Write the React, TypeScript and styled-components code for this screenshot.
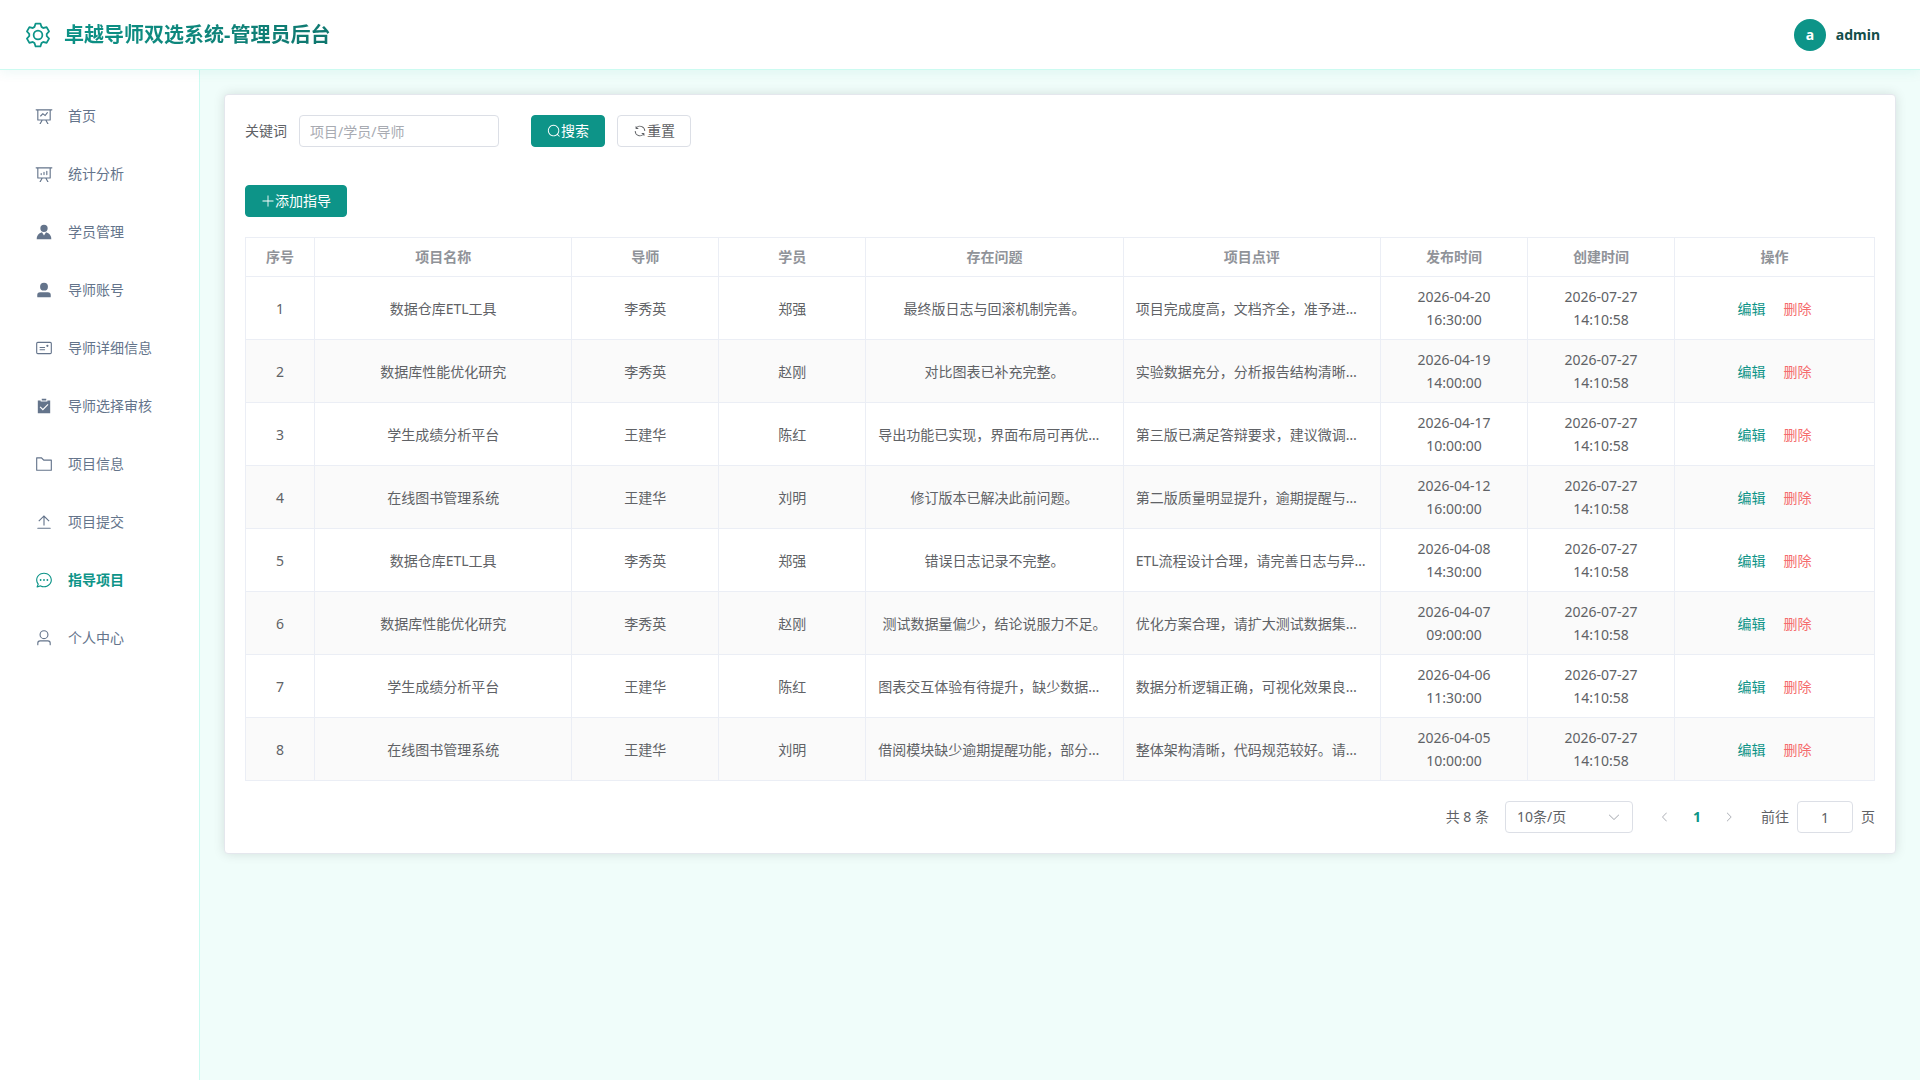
import React, { useState } from "react";
import styled, { createGlobalStyle } from "styled-components";

const color = {
  primary: "#0d9488",
  primaryDark: "#0f766e",
  ink: "#134e4a",
  mint: "#ccfbf1",
  page: "#f0fdfa",
  slate: "#64748b",
  text: "#606266",
  muted: "#909399",
  placeholder: "#a8abb2",
  border: "#dcdfe6",
  line: "#ebeef5",
  danger: "#f56c6c",
};

const GlobalStyle = createGlobalStyle`
  *, *::before, *::after { box-sizing: border-box; }
  body {
    margin: 0;
    background: ${color.page};
    color: ${color.text};
    font-family: "Noto Sans", "Noto Sans CJK SC", sans-serif;
    font-size: 14px;
    line-height: 22px;
  }
  button, input, select { font: inherit; color: inherit; margin: 0; }
`;

const icons = {
  setting:
    "M600.704 64a32 32 0 0 1 30.464 22.208l35.2 109.376c14.784 7.232 28.928 15.36 42.432 24.512l112.384-24.192a32 32 0 0 1 34.432 15.36L944.32 364.8a32 32 0 0 1-4.032 37.504l-77.12 85.12a357.12 357.12 0 0 1 0 49.024l77.12 85.248a32 32 0 0 1 4.032 37.504l-88.704 153.6a32 32 0 0 1-34.432 15.296L708.8 803.904c-13.44 9.088-27.648 17.28-42.368 24.512l-35.264 109.376A32 32 0 0 1 600.704 960H423.296a32 32 0 0 1-30.464-22.208L357.696 828.48a351.616 351.616 0 0 1-42.56-24.64l-112.32 24.256a32 32 0 0 1-34.432-15.36L79.68 659.2a32 32 0 0 1 4.032-37.504l77.12-85.248a357.12 357.12 0 0 1 0-48.896l-77.12-85.248A32 32 0 0 1 79.68 364.8l88.704-153.6a32 32 0 0 1 34.432-15.296l112.32 24.256c13.568-9.152 27.776-17.408 42.56-24.64l35.2-109.312A32 32 0 0 1 423.232 64H600.64zm-23.424 64H446.72l-36.352 113.088-24.512 11.968a294.113 294.113 0 0 0-34.816 20.096l-22.656 15.36-116.224-25.088-65.28 113.152 79.68 88.192-1.92 27.136a293.12 293.12 0 0 0 0 40.192l1.92 27.136-79.808 88.192 65.344 113.152 116.224-25.024 22.656 15.296a294.113 294.113 0 0 0 34.816 20.096l24.512 11.968L446.72 896h130.688l36.48-113.152 24.448-11.904a288.282 288.282 0 0 0 34.752-20.096l22.592-15.296 116.288 25.024 65.28-113.152-79.744-88.192 1.92-27.136a293.12 293.12 0 0 0 0-40.256l-1.92-27.136 79.808-88.128-65.344-113.152-116.288 24.96-22.592-15.232a287.616 287.616 0 0 0-34.752-20.096l-24.448-11.904L577.344 128zM512 320a192 192 0 1 1 0 384 192 192 0 0 1 0-384m0 64a128 128 0 1 0 0 256 128 128 0 0 0 0-256",
  dataLine:
    "M359.168 768H160a32 32 0 0 1-32-32V192H64a32 32 0 0 1 0-64h896a32 32 0 1 1 0 64h-64v544a32 32 0 0 1-32 32H665.216l110.848 192h-73.856L591.36 768H433.024L322.176 960H248.32zM832 192H192v512h640zM342.656 534.656a32 32 0 1 1-45.312-45.312L444.992 341.76l125.44 94.08L679.04 300.032a32 32 0 1 1 49.92 39.936L581.632 524.224 451.008 426.24 342.656 534.592z",
  dataAnalysis:
    "m665.216 768 110.848 192h-73.856L591.36 768H433.024L322.176 960H248.32l110.848-192H160a32 32 0 0 1-32-32V192H64a32 32 0 0 1 0-64h896a32 32 0 1 1 0 64h-64v544a32 32 0 0 1-32 32zM832 192H192v512h640zM352 448a32 32 0 0 1 32 32v64a32 32 0 0 1-64 0v-64a32 32 0 0 1 32-32m160-64a32 32 0 0 1 32 32v128a32 32 0 0 1-64 0V416a32 32 0 0 1 32-32m160-64a32 32 0 0 1 32 32v192a32 32 0 1 1-64 0V352a32 32 0 0 1 32-32",
  avatar:
    "M628.736 528.896A416 416 0 0 1 928 928H96a415.872 415.872 0 0 1 299.264-399.104L512 704zM720 304a208 208 0 1 1-416 0 208 208 0 0 1 416 0",
  userFilled:
    "M288 320a224 224 0 1 0 448 0 224 224 0 1 0-448 0m544 608H160a32 32 0 0 1-32-32v-96a160 160 0 0 1 160-160h448a160 160 0 0 1 160 160v96a32 32 0 0 1-32 32z",
  postcard:
    "M160 224a32 32 0 0 0-32 32v512a32 32 0 0 0 32 32h704a32 32 0 0 0 32-32V256a32 32 0 0 0-32-32zm0-64h704a96 96 0 0 1 96 96v512a96 96 0 0 1-96 96H160a96 96 0 0 1-96-96V256a96 96 0 0 1 96-96M704 320a64 64 0 1 1 0 128 64 64 0 0 1 0-128M288 448h256q32 0 32 32t-32 32H288q-32 0-32-32t32-32m0 128h256q32 0 32 32t-32 32H288q-32 0-32-32t32-32",
  checked:
    "M704 192h160v736H160V192h160.064v64H704zM311.616 537.28l-45.312 45.248L447.36 763.52l316.8-316.8-45.312-45.184L447.36 673.024zM384 192V96h256v96z",
  folder:
    "M128 192v640h768V320H485.76L357.504 192zm-32-64h287.872l128.384 128H928a32 32 0 0 1 32 32v576a32 32 0 0 1-32 32H96a32 32 0 0 1-32-32V160a32 32 0 0 1 32-32",
  upload:
    "M160 832h704a32 32 0 1 1 0 64H160a32 32 0 1 1 0-64m384-578.304V704h-64V247.296L237.248 490.048 192 444.8 508.8 128l316.8 316.8-45.312 45.248z",
  chat:
    "m174.72 855.68 135.296-45.12 23.68 11.84C388.096 849.536 448.576 864 512 864c211.84 0 384-166.784 384-352S723.84 160 512 160 128 326.784 128 512c0 69.12 24.96 139.264 70.848 199.232l22.08 28.8-46.272 115.584zm-45.248 82.56A32 32 0 0 1 89.6 896l58.368-145.92C94.72 680.32 64 596.864 64 512 64 299.904 256 96 512 96s448 203.904 448 416-192 416-448 416a461.056 461.056 0 0 1-206.912-48.384l-175.616 58.56zM512 563.2a51.2 51.2 0 1 1 0-102.4 51.2 51.2 0 0 1 0 102.4m192 0a51.2 51.2 0 1 1 0-102.4 51.2 51.2 0 0 1 0 102.4m-384 0a51.2 51.2 0 1 1 0-102.4 51.2 51.2 0 0 1 0 102.4",
  user:
    "M512 512a192 192 0 1 0 0-384 192 192 0 0 0 0 384m0 64a256 256 0 1 1 0-512 256 256 0 0 1 0 512m320 320v-96a96 96 0 0 0-96-96H288a96 96 0 0 0-96 96v96a32 32 0 1 1-64 0v-96a160 160 0 0 1 160-160h448a160 160 0 0 1 160 160v96a32 32 0 1 1-64 0",
  search:
    "m795.904 750.72 124.992 124.928a32 32 0 0 1-45.248 45.248L750.656 795.904a416 416 0 1 1 45.248-45.248zM480 832a352 352 0 1 0 0-704 352 352 0 0 0 0 704",
  refresh:
    "M771.776 794.88A384 384 0 0 1 128 512h64a320 320 0 0 0 555.712 216.448H654.72a32 32 0 1 1 0-64h149.056a32 32 0 0 1 32 32v148.928a32 32 0 1 1-64 0v-50.56zM276.288 295.616h92.992a32 32 0 0 1 0 64H220.16a32 32 0 0 1-32-32V178.56a32 32 0 0 1 64 0v50.56A384 384 0 0 1 896.128 512h-64a320 320 0 0 0-555.776-216.384z",
  plus:
    "M480 480V128a32 32 0 0 1 64 0v352h352a32 32 0 1 1 0 64H544v352a32 32 0 1 1-64 0V544H128a32 32 0 0 1 0-64z",
  arrowDown:
    "M831.872 340.864 512 652.672 192.128 340.864a30.592 30.592 0 0 0-42.752 0 29.12 29.12 0 0 0 0 41.6L489.664 714.24a32 32 0 0 0 44.672 0l340.288-331.712a29.12 29.12 0 0 0 0-41.728 30.592 30.592 0 0 0-42.752 0z",
  arrowLeft:
    "M609.408 149.376 277.76 489.6a32 32 0 0 0 0 44.672l331.648 340.352a29.12 29.12 0 0 0 41.728 0 30.592 30.592 0 0 0 0-42.752L339.264 511.936l311.872-319.872a30.592 30.592 0 0 0 0-42.688 29.12 29.12 0 0 0-41.728 0z",
  arrowRight:
    "M340.864 149.312a30.592 30.592 0 0 0 0 42.752L652.736 512 340.864 831.872a30.592 30.592 0 0 0 0 42.752 29.12 29.12 0 0 0 41.728 0L714.24 534.336a32 32 0 0 0 0-44.672L382.592 149.376a29.12 29.12 0 0 0-41.728 0z",
};

type IconName = keyof typeof icons;

const Svg = styled.svg`
  display: block;
  flex: none;
  fill: currentColor;
`;

const Icon = ({ name, size = 14 }: { name: IconName; size?: number }) => (
  <Svg viewBox="0 0 1024 1024" width={size} height={size} aria-hidden="true">
    <path d={icons[name]} />
  </Svg>
);

const Header = styled.header`
  position: relative;
  z-index: 1;
  display: flex;
  align-items: center;
  justify-content: space-between;
  height: 70px;
  padding: 0 24px;
  background: #fff;
  border-bottom: 1px solid ${color.mint};
  box-shadow: 0 2px 12px rgba(13, 148, 136, 0.08);
`;

const Brand = styled.div`
  display: flex;
  align-items: center;
  gap: 12px;
  color: ${color.primary};
`;

const Title = styled.h1`
  margin: 0;
  font-size: 20px;
  line-height: 29px;
  font-weight: 700;
  background: linear-gradient(135deg, ${color.primary}, ${color.primaryDark});
  background-clip: text;
  -webkit-background-clip: text;
  color: transparent;
`;

const Account = styled.div`
  display: flex;
  align-items: center;
  gap: 10px;
  padding: 0 16px;
  color: ${color.ink};
  font-weight: 700;
`;

const Badge = styled.span`
  display: grid;
  place-items: center;
  width: 32px;
  height: 32px;
  border-radius: 50%;
  background: ${color.primary};
  color: #fff;
`;

const Body = styled.div`
  display: flex;
  min-height: calc(100vh - 70px);
`;

const Sidebar = styled.nav`
  display: flex;
  flex: none;
  flex-direction: column;
  gap: 6px;
  width: 200px;
  padding: 20px 12px;
  background: #fff;
  border-right: 1px solid ${color.mint};
`;

const NavItem = styled.a<{ $active: boolean }>`
  display: flex;
  align-items: center;
  gap: 12px;
  height: 52px;
  padding: 0 20px;
  color: ${(p) => (p.$active ? color.primary : color.slate)};
  font-weight: ${(p) => (p.$active ? 700 : 400)};
  text-decoration: none;
`;

const NavIcon = styled.span`
  display: grid;
  place-items: center;
  width: 24px;
`;

const Main = styled.main`
  flex: 1;
  min-width: 0;
  padding: 24px;
`;

const Card = styled.section`
  display: flex;
  flex-direction: column;
  gap: 20px;
  padding: 20px;
  background: #fff;
  border: 1px solid #e4e7ed;
  border-radius: 4px;
  box-shadow: 0 0 12px rgba(0, 0, 0, 0.12);
`;

const SearchForm = styled.form`
  display: flex;
  align-items: center;
  gap: 32px;
  padding-bottom: 18px;
`;

const Field = styled.div`
  display: flex;
  align-items: center;
  gap: 12px;
`;

const TextInput = styled.input<{ $width: number; $center?: boolean }>`
  width: ${(p) => p.$width}px;
  height: 32px;
  padding: 0 10px;
  border: 1px solid ${color.border};
  border-radius: 4px;
  background: #fff;
  text-align: ${(p) => (p.$center ? "center" : "left")};
  outline: none;
  &::placeholder {
    color: ${color.placeholder};
    opacity: 1;
  }
  &:focus {
    border-color: ${color.primary};
  }
`;

const Button = styled.button<{ $primary?: boolean }>`
  display: inline-flex;
  align-items: center;
  height: 32px;
  padding: 0 15px;
  border: 1px solid ${(p) => (p.$primary ? color.primary : color.border)};
  border-radius: 4px;
  background: ${(p) => (p.$primary ? color.primary : "#fff")};
  color: ${(p) => (p.$primary ? "#fff" : color.text)};
  cursor: pointer;
`;

const Toolbar = styled.div`
  display: flex;
`;

const Table = styled.table`
  width: 100%;
  table-layout: fixed;
  border-collapse: separate;
  border-spacing: 0;
  text-align: center;
`;

const Col = styled.col<{ $width?: number }>`
  width: ${(p) => (p.$width ? `${p.$width}px` : "auto")};
`;

const HeadCell = styled.th`
  height: 40px;
  padding: 0 12px;
  border: solid ${color.line};
  border-width: 1px 1px 1px 0;
  color: ${color.muted};
  font-weight: 700;
  &:first-child {
    border-left-width: 1px;
  }
`;

const Row = styled.tr`
  &:nth-child(even) {
    background: #fafafa;
  }
`;

const Cell = styled.td`
  height: 63px;
  padding: 8px 12px;
  border: solid ${color.line};
  border-width: 0 1px 1px 0;
  line-height: 23px;
  &:first-child {
    border-left-width: 1px;
  }
`;

const ClippedCell = styled(Cell)`
  overflow: hidden;
  text-overflow: ellipsis;
  white-space: nowrap;
`;

const Actions = styled.div`
  display: flex;
  justify-content: center;
  gap: 18px;
`;

const TextButton = styled.button<{ $danger?: boolean }>`
  padding: 0;
  border: 0;
  background: none;
  color: ${(p) => (p.$danger ? color.danger : color.primary)};
  cursor: pointer;
`;

const Pagination = styled.div`
  display: flex;
  align-items: center;
  justify-content: flex-end;
  gap: 16px;
`;

const SelectBox = styled.div`
  display: grid;
  align-items: center;
  width: 128px;
  height: 32px;
  color: ${color.placeholder};
  & > * {
    grid-area: 1 / 1;
  }
  & > svg {
    justify-self: end;
    margin-right: 12px;
    pointer-events: none;
  }
`;

const Select = styled.select`
  appearance: none;
  width: 100%;
  height: 32px;
  padding: 0 30px 0 11px;
  border: 1px solid ${color.border};
  border-radius: 4px;
  background: #fff;
  color: ${color.text};
`;

const Pager = styled.div`
  display: flex;
`;

const PageButton = styled.button<{ $current?: boolean }>`
  display: grid;
  place-items: center;
  width: 32px;
  height: 32px;
  padding: 0;
  border: 0;
  background: none;
  color: ${(p) => (p.$current ? color.primary : color.placeholder)};
  font-weight: ${(p) => (p.$current ? 700 : 400)};
`;

const Jump = styled.label`
  display: flex;
  align-items: center;
  gap: 8px;
`;

const menu: { icon: IconName; label: string }[] = [
  { icon: "dataLine", label: "首页" },
  { icon: "dataAnalysis", label: "统计分析" },
  { icon: "avatar", label: "学员管理" },
  { icon: "userFilled", label: "导师账号" },
  { icon: "postcard", label: "导师详细信息" },
  { icon: "checked", label: "导师选择审核" },
  { icon: "folder", label: "项目信息" },
  { icon: "upload", label: "项目提交" },
  { icon: "chat", label: "指导项目" },
  { icon: "user", label: "个人中心" },
];

const columns: { title: string; width?: number }[] = [
  { title: "序号", width: 70 },
  { title: "项目名称" },
  { title: "导师", width: 147 },
  { title: "学员", width: 147 },
  { title: "存在问题" },
  { title: "项目点评" },
  { title: "发布时间", width: 147 },
  { title: "创建时间", width: 147 },
  { title: "操作", width: 200 },
];

const created = "2026-07-27 14:10:58";

const records = [
  ["数据仓库ETL工具", "李秀英", "郑强", "最终版日志与回滚机制完善。", "项目完成度高，文档齐全，准予进入答辩。", "2026-04-20 16:30:00"],
  ["数据库性能优化研究", "李秀英", "赵刚", "对比图表已补充完整。", "实验数据充分，分析报告结构清晰明了。", "2026-04-19 14:00:00"],
  ["学生成绩分析平台", "王建华", "陈红", "导出功能已实现，界面布局可再优化。", "第三版已满足答辩要求，建议微调界面。", "2026-04-17 10:00:00"],
  ["在线图书管理系统", "王建华", "刘明", "修订版本已解决此前问题。", "第二版质量明显提升，逾期提醒与统计。", "2026-04-12 16:00:00"],
  ["数据仓库ETL工具", "李秀英", "郑强", "错误日志记录不完整。", "ETL流程设计合理，请完善日志与异常。", "2026-04-08 14:30:00"],
  ["数据库性能优化研究", "李秀英", "赵刚", "测试数据量偏少，结论说服力不足。", "优化方案合理，请扩大测试数据集规模。", "2026-04-07 09:00:00"],
  ["学生成绩分析平台", "王建华", "陈红", "图表交互体验有待提升，缺少数据导出。", "数据分析逻辑正确，可视化效果良好。", "2026-04-06 11:30:00"],
  ["在线图书管理系统", "王建华", "刘明", "借阅模块缺少逾期提醒功能，部分缺失。", "整体架构清晰，代码规范较好。请补充。", "2026-04-05 10:00:00"],
];

export default function App() {
  const [keyword, setKeyword] = useState("");
  const [page, setPage] = useState("1");

  return (
    <>
      <GlobalStyle />
      <Header>
        <Brand>
          <Icon name="setting" size={28} />
          <Title>卓越导师双选系统-管理员后台</Title>
        </Brand>
        <Account>
          <Badge>a</Badge>
          <span>admin</span>
        </Account>
      </Header>
      <Body>
        <Sidebar>
          {menu.map((item) => (
            <NavItem key={item.label} href="#" $active={item.label === "指导项目"}>
              <NavIcon>
                <Icon name={item.icon} size={18} />
              </NavIcon>
              {item.label}
            </NavItem>
          ))}
        </Sidebar>
        <Main>
          <Card>
            <SearchForm onSubmit={(e) => e.preventDefault()}>
              <Field>
                <label htmlFor="keyword">关键词</label>
                <TextInput
                  id="keyword"
                  $width={200}
                  placeholder="项目/学员/导师"
                  value={keyword}
                  onChange={(e) => setKeyword(e.target.value)}
                />
              </Field>
              <Field>
                <Button type="submit" $primary>
                  <Icon name="search" />
                  搜索
                </Button>
                <Button type="button" onClick={() => setKeyword("")}>
                  <Icon name="refresh" />
                  重置
                </Button>
              </Field>
            </SearchForm>
            <Toolbar>
              <Button type="button" $primary>
                <Icon name="plus" />
                添加指导
              </Button>
            </Toolbar>
            <Table>
              <colgroup>
                {columns.map((c) => (
                  <Col key={c.title} $width={c.width} />
                ))}
              </colgroup>
              <thead>
                <tr>
                  {columns.map((c) => (
                    <HeadCell key={c.title} scope="col">
                      {c.title}
                    </HeadCell>
                  ))}
                </tr>
              </thead>
              <tbody>
                {records.map(([name, tutor, student, problem, comment, published], i) => (
                  <Row key={published}>
                    <Cell>{i + 1}</Cell>
                    <ClippedCell>{name}</ClippedCell>
                    <Cell>{tutor}</Cell>
                    <Cell>{student}</Cell>
                    <ClippedCell>{problem}</ClippedCell>
                    <ClippedCell>{comment}</ClippedCell>
                    <Cell>{published}</Cell>
                    <Cell>{created}</Cell>
                    <Cell>
                      <Actions>
                        <TextButton type="button">编辑</TextButton>
                        <TextButton type="button" $danger>
                          删除
                        </TextButton>
                      </Actions>
                    </Cell>
                  </Row>
                ))}
              </tbody>
            </Table>
            <Pagination>
              <span>共 8 条</span>
              <SelectBox>
                <Select aria-label="每页条数" defaultValue="10">
                  <option value="10">10条/页</option>
                  <option value="20">20条/页</option>
                  <option value="50">50条/页</option>
                </Select>
                <Icon name="arrowDown" />
              </SelectBox>
              <Pager>
                <PageButton type="button" disabled aria-label="上一页">
                  <Icon name="arrowLeft" size={12} />
                </PageButton>
                <PageButton type="button" $current>
                  1
                </PageButton>
                <PageButton type="button" disabled aria-label="下一页">
                  <Icon name="arrowRight" size={12} />
                </PageButton>
              </Pager>
              <Jump>
                前往
                <TextInput
                  $width={56}
                  $center
                  inputMode="numeric"
                  value={page}
                  onChange={(e) => setPage(e.target.value)}
                />
                页
              </Jump>
            </Pagination>
          </Card>
        </Main>
      </Body>
    </>
  );
}
